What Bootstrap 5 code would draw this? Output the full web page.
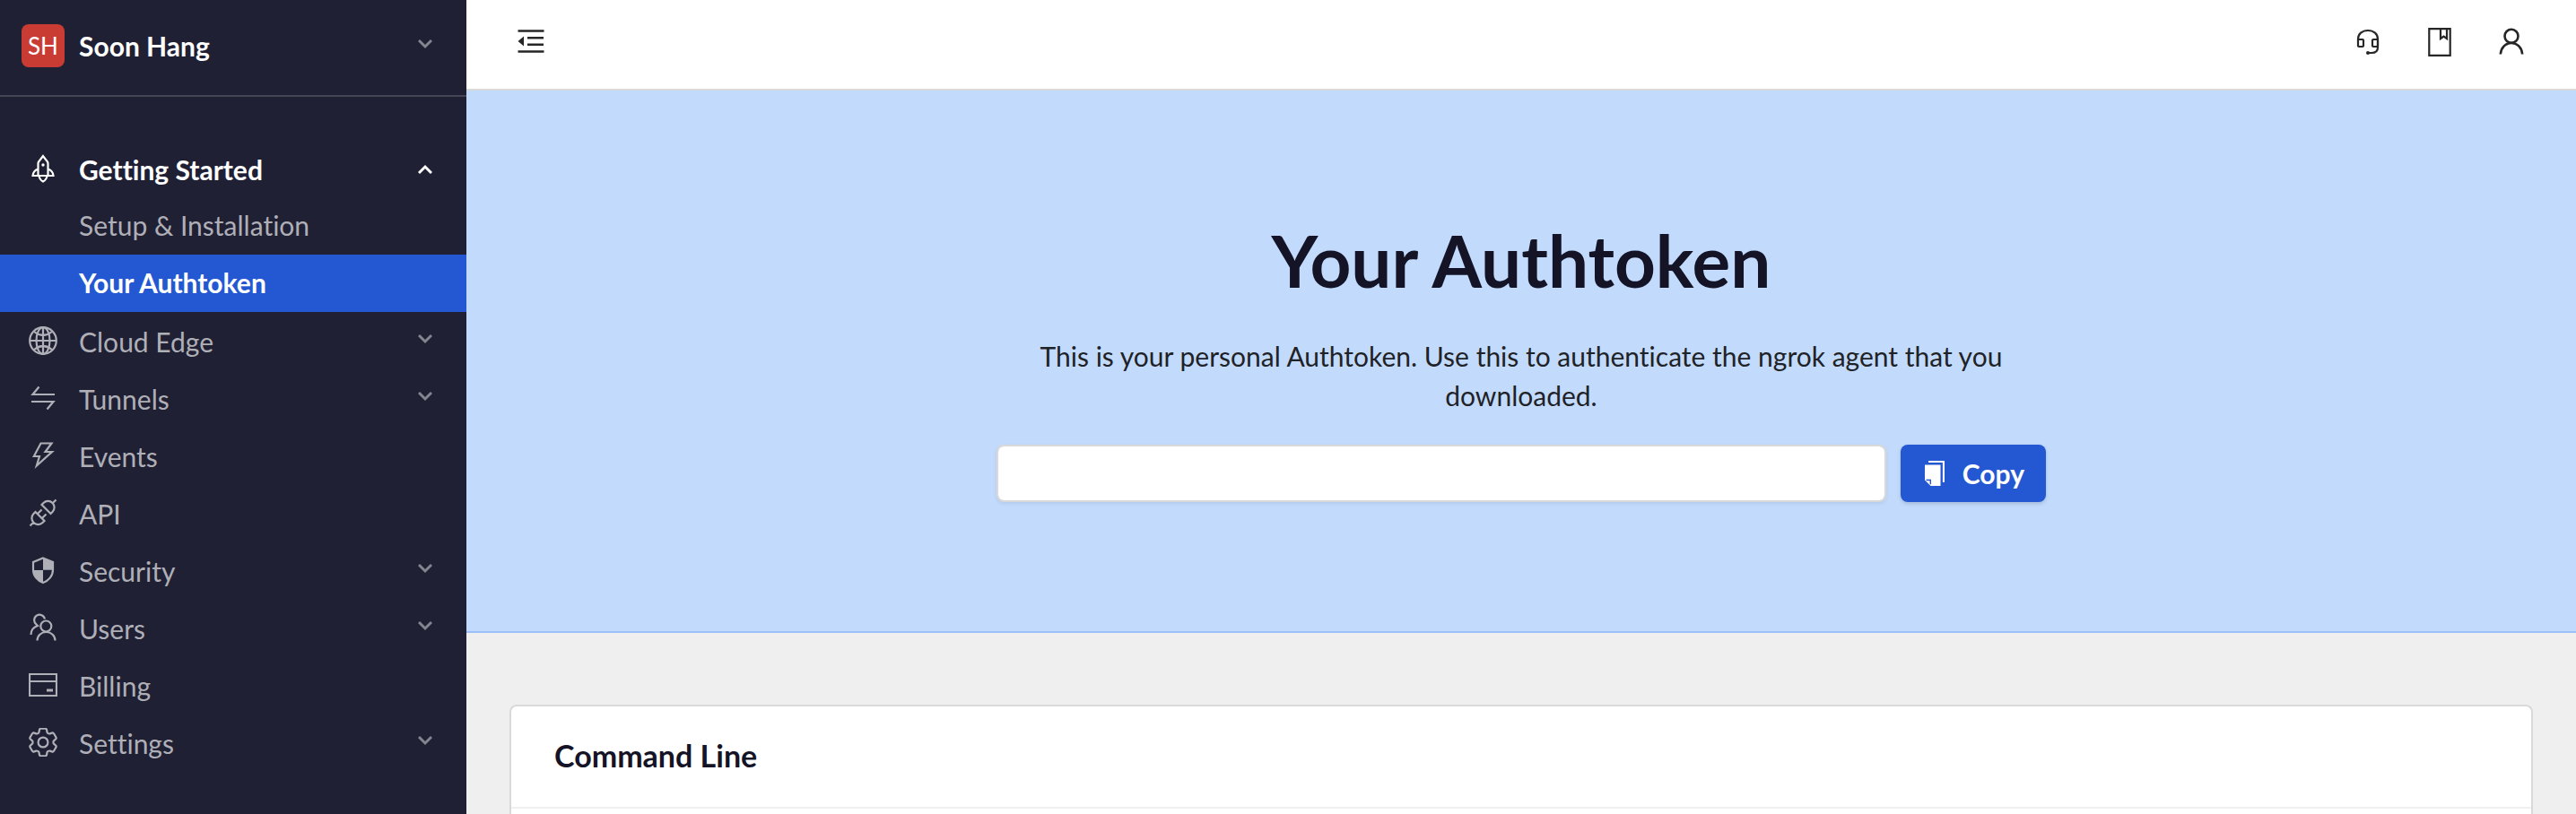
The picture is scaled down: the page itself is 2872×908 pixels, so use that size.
<!DOCTYPE html>
<html lang="en">
<head>
<meta charset="utf-8">
<meta name="viewport" content="width=device-width, initial-scale=1">
<title>Your Authtoken</title>
<link href="https://cdn.jsdelivr.net/npm/bootstrap@5.3.0/dist/css/bootstrap.min.css" rel="stylesheet">
<style>
body{font-family:Lato,"Open Sans",sans-serif;font-size:30px;line-height:44px;font-variant-ligatures:none;color:#1f2226;background:#efefef}
button{font-variant-ligatures:none}
svg{display:block;flex:none;fill:none;stroke:currentColor;stroke-width:2.2}
.sidebar{flex:0 0 520px;background:#202034;color:#afafb7}
.account{padding:27px 38px 31px 24px;border:0;border-bottom:2px solid #454556;background:none;color:#fff;gap:16px;line-height:48px}
.avatar{width:48px;height:48px;border-radius:8px;background:#c93c34;font-size:26px;text-align:center}
.side-nav{padding-top:52px}
.side-item{min-height:64px;padding:0 38px 2px 32px;gap:24px;background:none;border:0;color:inherit;text-decoration:none;text-align:left}
.side-item.open{min-height:60px;color:#fff}
.side-item .icon{margin-bottom:2px}
.side-item .chev{margin-bottom:6px}
.side-item.open .chev{margin-bottom:0;color:#fff}
.side-group{margin-bottom:2px}
.side-sub{min-height:64px;padding:0 38px 2px 88px;color:inherit;text-decoration:none}
.side-sub.current{background:#2458d3;color:#fff}
.chev{color:#85858f;margin-left:auto;stroke-width:3}
.strong{font-weight:700}
.topbar{background:#fff;border-bottom:2px solid #d9d9d9;padding:31px 56px 36px;color:#262626}
.icon-btn{border:0;padding:0;background:none;color:inherit}
.hero{background:#c2dbfd;border-bottom:2px solid #9cc0fa;padding:143px 24px 144px}
.hero-inner{max-width:1170px}
.hero h1{font-size:80px;line-height:92px;font-weight:700;margin-bottom:39px;color:#141426}
.hero p{margin-bottom:33px;padding:0 48px}
.token{height:64px;border:2px solid #d9d9d9;border-radius:8px;box-shadow:0 2px 4px rgba(0,0,0,.08);font-size:30px}
.copy{height:64px;padding:0 24px 0 27px;border:0;border-radius:8px;background:#2458d3;color:#fff;font-size:30px;font-weight:700;gap:20px;box-shadow:0 2px 4px rgba(0,0,0,.16)}
.content{padding:80px 48px 0}
.panel{border:2px solid #d9d9d9;border-bottom:0;border-radius:8px 8px 0 0;background:#fff}
.panel h2{margin:0;padding:33px 48px 35px;border-bottom:2px solid #f0f0f0;font-size:34px;line-height:44px;font-weight:700;color:#141426}
</style>
</head>
<body>
<div class="d-flex min-vh-100">
  <aside class="sidebar d-flex flex-column">
    <button class="account d-flex align-items-center strong" type="button">
      <span class="avatar fw-normal">SH</span>
      <span>Soon Hang</span>
      <svg class="chev mb-1" width="16" height="12" viewBox="0 0 16 12"><path d="M1 2l7 7 7-7"/></svg>
    </button>
    <nav class="side-nav d-flex flex-column" aria-label="Main">
      <button class="side-item open strong d-flex align-items-center" type="button">
        <svg class="icon" width="32" height="32" viewBox="0 0 32 32"><path d="M16 2l-5 6.500q-.5 1-.5 2V24h11V10.500q0-1-.5-2zM10.500 16.500Q5 18.500 4.500 24h6m11-7.500q5.500 2 6 7.500h-6M11.500 24q.5 4.500 4.500 6.500 4-2 4.500-6.500"/><circle cx="16" cy="12" r="1.700" fill="currentColor" stroke="none"/></svg>
        <span>Getting Started</span>
        <svg class="chev" width="16" height="12" viewBox="0 0 16 12"><path d="M1 10l7-7 7 7"/></svg>
      </button>
      <div class="side-group d-flex flex-column">
        <a class="side-sub d-flex align-items-center" href="#"><span>Setup &amp; Installation</span></a>
        <a class="side-sub current strong d-flex align-items-center" href="#" aria-current="page"><span>Your Authtoken</span></a>
      </div>
      <button class="side-item d-flex align-items-center" type="button">
        <svg class="icon" width="32" height="32" viewBox="0 0 32 32"><circle cx="16" cy="16" r="14.800"/><ellipse cx="16" cy="16" rx="7.500" ry="14.800"/><path d="M16 1v30M1 16h30M6 6q10 8 20 0M6 26q10-8 20 0"/></svg>
        <span>Cloud Edge</span>
        <svg class="chev" width="16" height="12" viewBox="0 0 16 12"><path d="M1 2l7 7 7-7"/></svg>
      </button>
      <button class="side-item d-flex align-items-center" type="button">
        <svg class="icon" width="32" height="32" viewBox="0 0 32 32"><path d="M11.500 3.500L4.500 12H29M3 20h24.500l-7 8.500"/></svg>
        <span>Tunnels</span>
        <svg class="chev" width="16" height="12" viewBox="0 0 16 12"><path d="M1 2l7 7 7-7"/></svg>
      </button>
      <a class="side-item d-flex align-items-center" href="#">
        <svg class="icon" width="32" height="32" viewBox="0 0 32 32"><path d="M13.500 2.500H25.500L18.500 12H26L8.800 27.500 12 17H5.800z"/></svg>
        <span>Events</span>
      </a>
      <a class="side-item d-flex align-items-center" href="#">
        <svg class="icon" width="32" height="32" viewBox="0 0 32 32"><path d="M30.500 1.500l-4 4M14.500 7l10 10 2-2a7.070 7.070 0 0 0-10-10zM1.500 30.500l4-4M7.500 15l10 10-2 2a7.070 7.070 0 0 1-10-10zM10 17l4.500-4.500M15 22l4.500-4.500"/></svg>
        <span>API</span>
      </a>
      <button class="side-item d-flex align-items-center" type="button">
        <svg class="icon" width="32" height="32" viewBox="0 0 32 32"><path d="M16 2.500l11 4.500v8.500c0 7-5 12.500-11 14.500-6-2-11-7.500-11-14.500V7z"/><path d="M16 2.500l11 4.500v8.700H16zM16 16v14c-6-2-11-7.500-11-14z" fill="currentColor" stroke="none"/></svg>
        <span>Security</span>
        <svg class="chev" width="16" height="12" viewBox="0 0 16 12"><path d="M1 2l7 7 7-7"/></svg>
      </button>
      <button class="side-item d-flex align-items-center" type="button">
        <svg class="icon" width="32" height="32" viewBox="0 0 32 32"><circle cx="19.300" cy="14.500" r="6"/><path d="M9.500 30.500c0-5.500 4.500-9.500 10-9.500s10 4 10 9.500M18 6.500A6 6 0 1 0 8.500 12.500l1.500 1.500q-7.500 2.500-7.500 10"/></svg>
        <span>Users</span>
        <svg class="chev" width="16" height="12" viewBox="0 0 16 12"><path d="M1 2l7 7 7-7"/></svg>
      </button>
      <a class="side-item d-flex align-items-center" href="#">
        <svg class="icon" width="32" height="32" viewBox="0 0 32 32"><path d="M1 4h30v24H1zM1 12h30"/><path d="M20 22h7" stroke-width="3"/></svg>
        <span>Billing</span>
      </a>
      <button class="side-item d-flex align-items-center" type="button">
        <svg class="icon" width="32" height="32" viewBox="0 0 32 32"><g transform="translate(-4.400 -4.400) scale(1.700)" stroke-width="1.300"><path d="M9.594 3.940c.09-.542.56-.94 1.110-.94h2.593c.55 0 1.020.398 1.110.94l.213 1.281c.063.374.313.686.645.87.074.04.147.083.22.127.325.196.72.257 1.075.124l1.217-.456a1.125 1.125 0 0 1 1.370.49l1.296 2.247a1.125 1.125 0 0 1-.26 1.431l-1.003.827c-.293.241-.438.613-.43.992a7.723 7.723 0 0 1 0 .255c-.008.378.137.75.43.991l1.004.827c.424.35.534.955.26 1.430l-1.298 2.247a1.125 1.125 0 0 1-1.369.491l-1.217-.456c-.355-.133-.75-.072-1.076.124a6.470 6.470 0 0 1-.22.128c-.331.183-.581.495-.644.869l-.213 1.281c-.09.543-.56.94-1.110.94h-2.594c-.55 0-1.019-.398-1.110-.94l-.213-1.281c-.062-.374-.312-.686-.644-.87a6.520 6.520 0 0 1-.22-.127c-.325-.196-.72-.257-1.076-.124l-1.217.456a1.125 1.125 0 0 1-1.369-.49l-1.297-2.247a1.125 1.125 0 0 1 .26-1.431l1.004-.827c.292-.24.437-.613.43-.991a6.932 6.932 0 0 1 0-.255c.007-.38-.138-.751-.43-.992l-1.004-.827a1.125 1.125 0 0 1-.26-1.430l1.297-2.247a1.125 1.125 0 0 1 1.370-.491l1.216.456c.356.133.751.072 1.076-.124.072-.044.146-.086.22-.128.332-.183.582-.495.644-.869z"/><circle cx="12" cy="12" r="3.200"/></g></svg>
        <span>Settings</span>
        <svg class="chev" width="16" height="12" viewBox="0 0 16 12"><path d="M1 2l7 7 7-7"/></svg>
      </button>
    </nav>
  </aside>

  <div class="d-flex flex-column flex-grow-1">
    <header class="topbar d-flex justify-content-between">
      <button class="icon-btn" type="button" aria-label="Collapse menu">
        <svg width="32" height="32" viewBox="0 0 32 32"><path d="M1.500 3.500h29M12 11.300h18M12 18.700h18M1.500 26.500h29" stroke-width="2.600"/><path d="M1.500 15L8 9.500v11z" fill="currentColor" stroke="none"/></svg>
      </button>
      <div class="d-flex gap-5">
        <button class="icon-btn" type="button" aria-label="Support">
          <svg width="32" height="32" viewBox="0 0 32 32"><path d="M5 14v-1.500C5 7 9.500 3 16 3s11 4 11 9.500V22c0 4-3 6-7 6h-4"/><rect x="5" y="13" width="6" height="8" rx="1"/><rect x="21" y="13" width="6" height="8" rx="1"/><circle cx="16" cy="28" r="2" fill="currentColor" stroke="none"/></svg>
        </button>
        <button class="icon-btn" type="button" aria-label="Documentation">
          <svg width="32" height="32" viewBox="0 0 32 32"><path d="M4.300 1.100h23.400v29.800H4.300zM17 1v11l3.500-2.500L24 12V1"/></svg>
        </button>
        <button class="icon-btn" type="button" aria-label="Profile">
          <svg width="32" height="32" viewBox="0 0 32 32"><g stroke-width="2.600"><circle cx="16" cy="9.300" r="7.500"/><path d="M3.800 29.500C4.500 22 9.500 17 16 17s11.500 5 12.200 12.500"/></g></svg>
        </button>
      </div>
    </header>

    <section class="hero">
      <div class="hero-inner mx-auto text-center">
        <h1>Your Authtoken</h1>
        <p>This is your personal Authtoken. Use this to authenticate the ngrok agent that you downloaded.</p>
        <div class="d-flex gap-3">
          <input class="token form-control" type="text" aria-label="Authtoken" readonly>
          <button class="copy btn d-flex align-items-center" type="button">
            <svg width="22" height="28" viewBox="0 0 22 28"><path d="M4 1h17v23"/><path d="M0 4.500h17.500V28H6.500L0 21.500z" fill="currentColor" stroke="none"/><path d="M1.500 21.500h4.800v4.800" stroke="#2458d3" stroke-width="1.400"/></svg>
            <span>Copy</span>
          </button>
        </div>
      </div>
    </section>

    <main class="content d-flex flex-column flex-grow-1">
      <section class="panel flex-grow-1">
        <h2>Command Line</h2>
      </section>
    </main>
  </div>
</div>
<script src="https://cdn.jsdelivr.net/npm/bootstrap@5.3.0/dist/js/bootstrap.bundle.min.js"></script>
</body>
</html>
